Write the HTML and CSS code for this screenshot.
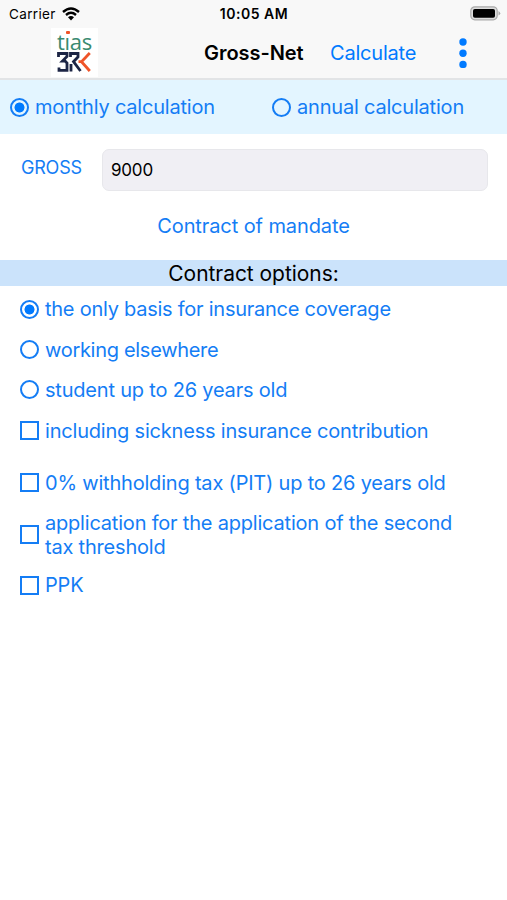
FILE: index.html
```html
<!DOCTYPE html>
<html lang="en">
<head>
<meta charset="utf-8">
<title>Gross-Net</title>
<link rel="stylesheet" href="styles.css">
</head>
<body>
<header class="header">
  <div class="status">
    <div class="carrier"><span>Carrier</span>
      <svg class="wifi" width="18" height="14" viewBox="0 0 18 14" fill="none" stroke="#000" stroke-width="2.4"><path d="M1 5Q9-2 17 5M4 8Q9 3.7 14 8"/><path d="M9 13.4L6 10.2Q9 8 12 10.2Z" fill="#000" stroke="none"/></svg>
    </div>
    <time class="time">10:05 AM</time>
    <svg class="battery" width="31" height="15" viewBox="0 0 31 15"><rect x=".8" y=".8" width="26.4" height="13" rx="4" fill="#ddd" stroke="#aaa" stroke-width="1.2"/><rect x="3" y="3" width="22" height="8.7" rx="1.8"/><path d="M28.5 5Q32 7.3 28.5 9.6Z" fill="#aaa"/></svg>
  </div>
  <nav class="nav">
    <div class="logo">
      <span class="logo-name">t<span class="logo-i">ı</span>as</span>
      <svg class="logo-mark" width="36" height="20" viewBox="0 0 36 20" fill="none" stroke="#1c2545" stroke-width="2.8"><path d="M1.5 5V1.5H10V4.5L5.5 9H8L10 11V18.3H2V15.5"/><path d="M13.5 5V1.5H21V5L16.5 9.7L23.5 19M14 12V19.5"/><path d="M32.8 1L24.5 9.7L32.8 19M21.5 9.7H25.5" stroke="#ef5429"/></svg>
    </div>
    <h1 class="title">Gross-Net</h1>
    <a class="calculate">Calculate</a>
    <svg class="more" width="8" height="30" viewBox="0 0 8 30" fill="#007aff"><circle cx="4" cy="4" r="3.7"/><circle cx="4" cy="15.2" r="3.7"/><circle cx="4" cy="26.4" r="3.7"/></svg>
  </nav>
</header>
<main>
  <div class="period">
    <label class="choice"><i class="radio on"></i><span>monthly calculation</span></label>
    <label class="choice"><i class="radio"></i><span>annual calculation</span></label>
  </div>
  <div class="gross"><span class="gross-label">GROSS</span><div class="field">9000</div></div>
  <a class="contract">Contract of mandate</a>
  <h2 class="heading">Contract options:</h2>
  <div class="options">
    <label class="choice"><i class="radio on"></i><span class="basis">the only basis for insurance coverage</span></label>
    <label class="choice"><i class="radio"></i><span class="working">working elsewhere</span></label>
    <label class="choice"><i class="radio"></i><span>student up to 26 years old</span></label>
    <label class="choice sick"><i class="check"></i><span>including sickness insurance contribution</span></label>
    <label class="choice"><i class="check"></i><span>0% withholding tax (PIT) up to 26 years old</span></label>
    <label class="choice double"><i class="check"></i><span>application for the application of the second<br>tax threshold</span></label>
    <label class="choice"><i class="check"></i><span>PPK</span></label>
  </div>
</main>
</body>
</html>
```
FILE: styles.css
```css
* { box-sizing: border-box; }
body { margin: 0; min-height: 900px; background: #fff; color: #000; font-family: Inter, "Liberation Sans", sans-serif; font-size: 20px; letter-spacing: -.2px; }
.header { height: 80px; background: #f8f8f8; border-bottom: 2px solid #e2e4e6; }
.status { display: grid; grid-template-columns: 1fr auto 1fr; align-items: center; height: 27px; padding: 0 6px 0 9px; font-size: 13.5px; letter-spacing: .35px; }
.carrier { display: flex; align-items: center; gap: 6px; }
.time { margin-right: 2px; font-weight: 600; font-size: 14px; letter-spacing: .5px; }
.battery { justify-self: end; }
.nav { display: flex; height: 51px; align-items: center; padding-left: 51px; }
.logo { display: flex; flex-direction: column; align-items: center; width: 47px; height: 49px; background: #fff; }
.logo-name { height: 24px; line-height: 27px; font-family: "Open Sans", sans-serif; font-size: 22px; letter-spacing: -.3px; color: #398a70; }
.logo-i { position: relative; }
.logo-i::before { content: ""; position: absolute; left: 1px; top: 5px; width: 4px; height: 3px; background: #ef5429; border-radius: 1px; }
.title { margin: 0 0 0 106px; width: 126px; font-size: 20px; font-weight: 600; letter-spacing: -.05px; }
.calculate { width: 129px; color: #007aff; }
.period { display: grid; grid-template-columns: 262px 1fr; height: 54px; padding: 0 10px; background: #e3f5ff; }
.choice { display: flex; align-items: center; gap: 6px; height: 40.4px; color: #147df5; line-height: 24.5px; white-space: nowrap; }
.period .choice { height: 54px; }
.radio, .check { flex: none; width: 19px; height: 19px; border: 2px solid #147df5; }
.radio { border-radius: 50%; }
.on { background: radial-gradient(circle, #007aff 4.7px, transparent 5.3px); }
.gross { display: flex; height: 57px; padding: 15px 19px 0 21px; }
.gross-label { width: 81px; padding-top: 7px; font-size: 18px; line-height: 24px; color: #147df5; }
.field { flex: 1; height: 42px; padding-left: 8px; border: 1px solid #e7e7eb; border-radius: 7px; background: #f0eff4; font-size: 17px; line-height: 41px; }
.contract { display: block; height: 69px; line-height: 70px; text-align: center; letter-spacing: -.1px; color: #147df5; }
.heading { height: 26px; margin: 0; background: #cbe3fb; font-size: 21px; font-weight: 400; line-height: 27px; letter-spacing: -.05px; text-align: center; }
.options { padding: 3px 20px; }
.options span { padding-top: 1px; }
.basis { letter-spacing: -.25px; }
.working { letter-spacing: -.3px; }
.sick { margin-bottom: 12px; }
.double { height: 62px; padding-top: 1px; }
.double span { padding-top: 2px; }
```
